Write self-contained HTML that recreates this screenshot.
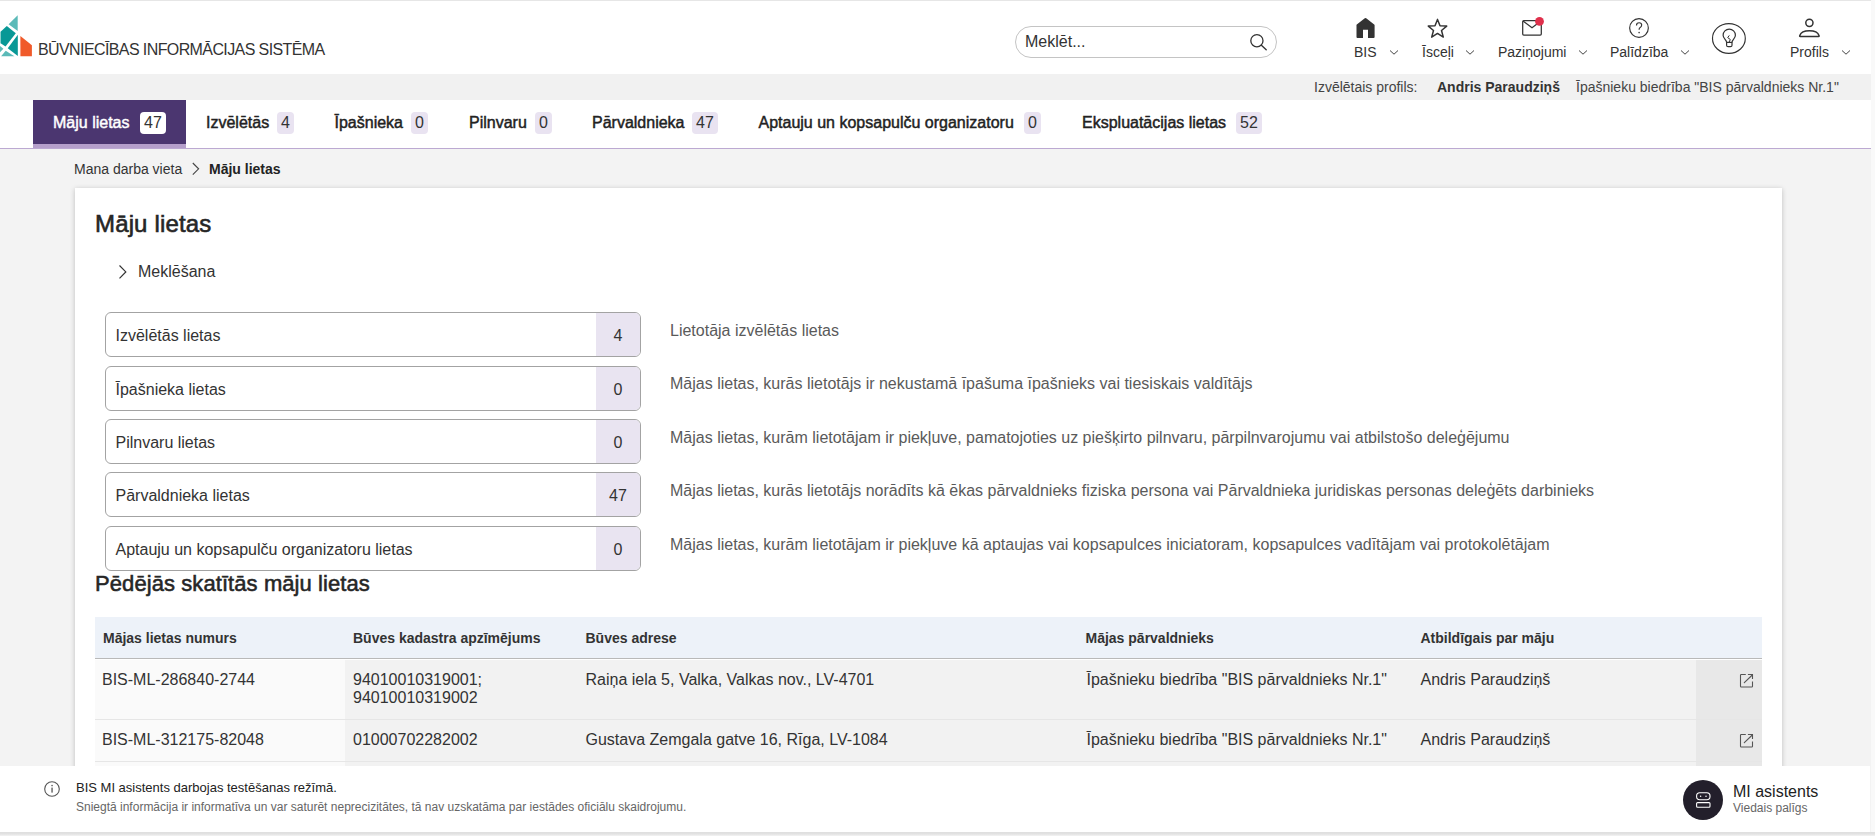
<!DOCTYPE html>
<html><head><meta charset="utf-8">
<style>
*{box-sizing:border-box;margin:0;padding:0}
html,body{width:1875px;height:836px;overflow:hidden}
body{font-family:"Liberation Sans",sans-serif;background:#f9f9f9;color:#222;position:relative}
.abs{position:absolute;white-space:nowrap}
#page{position:absolute;left:0;top:0;width:1871px;height:836px;background:#f3f3f3;overflow:hidden}
#hdr{position:absolute;left:0;top:0;width:1871px;height:74px;background:#fff;border-top:1px solid #e6e6e6}
#prof{position:absolute;left:0;top:74px;width:1871px;height:26px;background:#f1f1f1;font-size:14px;color:#444}
#tabs{position:absolute;left:0;top:100px;width:1871px;height:49px;background:#fff;border-bottom:1px solid #bca9d2}
.tabt{top:14px;font-size:16px;font-weight:400;color:#222;-webkit-text-stroke:0.45px currentColor}
.tab .t{position:absolute;top:15px}
.badge{position:absolute;top:12px;height:22px;border-radius:4px;background:#e9e3f1;color:#333;font-weight:400;font-size:16px;letter-spacing:0;text-align:center;line-height:22px}
.tab.act{background:#4b3670;color:#fff;border-bottom:4px solid #b59fcb;height:48px}
.tab.act .badge{background:#fff;color:#333}
#crumb{font-size:14px;color:#333}
#card{position:absolute;left:75px;top:188px;width:1707px;height:700px;background:#fff;box-shadow:0 1px 5px rgba(0,0,0,.22)}
.box{position:absolute;left:30px;width:536px;height:45px;border:1px solid #a3a3a3;border-radius:6px;overflow:hidden;background:#fff}
.box .l{position:absolute;left:9.5px;top:14px;font-size:16px;color:#333}
.box .c{position:absolute;right:0;top:0;width:44px;height:100%;background:#e9e4f1;font-size:16px;color:#333;text-align:center;line-height:45px}
.desc{position:absolute;left:595px;font-size:16px;color:#5a5a5a}
table{border-collapse:collapse}
.nav{font-size:14px;color:#333}
.th{font-size:14px;font-weight:700;color:#333}
.td{font-size:16px;color:#333;line-height:18px}
#foot{position:absolute;left:0;top:766px;width:1870px;height:66px;background:#fff}
#fbot{position:absolute;left:0;top:832px;width:1875px;height:4px;background:linear-gradient(#dedede,#e2e2e2 50%,#f3f3f3)}
</style></head><body>
<div id="page">
  <div id="hdr">
    <svg class="abs" style="left:0;top:-1px" width="34" height="60" viewBox="0 0 34 60">
      <polygon fill="#5bbab8" points="17.7,15.2 8.6,24.3 17.7,30.9"/>
      <polygon fill="#089896" points="6.8,26.1 15.8,33.2 5.5,46.4 0.6,43.3 0.6,31.8"/>
      <rect fill="#7ccac8" x="0" y="31.8" width="0.7" height="11.5"/>
      <polygon fill="#089896" points="17.8,34.7 17.8,55.9 7.75,48.2"/>
      <polygon fill="#5bbab8" points="1.1,56.2 14.4,56.2 5.7,50.7"/>
      <polygon fill="#5bbab8" points="0,45.9 3.4,48.7 0,52.2"/>
      <polygon fill="#f05a2a" points="20.4,36.1 31.9,45.3 31.9,56.2 20.4,56.2"/>
    </svg>
    <div class="abs" style="left:38px;top:40px;font-size:16px;letter-spacing:-0.6px;color:#333">BŪVNIECĪBAS INFORMĀCIJAS SISTĒMA</div>
    <div class="abs" style="left:1015px;top:25px;width:262px;height:32px;border:1px solid #c4c4c4;border-radius:16px;background:#fff"></div>
    <div class="abs" style="left:1025px;top:32px;font-size:16px;color:#333">Meklēt...</div>
    <svg class="abs" style="left:1248px;top:32px" width="22" height="20" viewBox="0 0 22 20">
      <circle cx="8.9" cy="7.7" r="6.1" fill="none" stroke="#333" stroke-width="1.3"/>
      <line x1="13.4" y1="12.3" x2="18.2" y2="16.7" stroke="#333" stroke-width="1.4" stroke-linecap="round"/>
    </svg>
    <!-- BIS home -->
    <svg class="abs" style="left:1355px;top:15px" width="22" height="22" viewBox="0 0 22 22">
      <path transform="translate(0,0.4)" d="M1.5,9.2 Q1.2,8.6 1.8,8.1 L9.8,1.9 Q10.5,1.4 11.2,1.9 L19.2,8.1 Q19.8,8.6 19.6,9.2 V20.6 Q19.6,21.6 18.6,21.6 H13 V13.4 H8 V21.6 H2.4 Q1.5,21.6 1.5,20.6 Z" fill="#333"/>
    </svg>
    <div class="abs nav" style="left:1354px;top:43px">BIS</div>
    <svg class="abs chev" style="left:1389px;top:48px" width="10" height="7" viewBox="0 0 10 7"><path d="M1,1.5 L5,5.2 L9,1.5" fill="none" stroke="#444" stroke-width="1"/></svg>
    <!-- star -->
    <svg class="abs" style="left:1426px;top:16px" width="23" height="23" viewBox="0 0 23 23">
      <path d="M11.5,2.4 L14.0,8.8 L20.7,9.1 L15.5,13.5 L17.3,20.1 L11.5,16.4 L5.7,20.1 L7.5,13.5 L2.3,9.1 L9.0,8.8 Z" fill="none" stroke="#333" stroke-width="1.5" stroke-linejoin="round"/>
    </svg>
    <div class="abs nav" style="left:1422px;top:43px">Īsceļi</div>
    <svg class="abs chev" style="left:1465px;top:48px" width="10" height="7" viewBox="0 0 10 7"><path d="M1,1.5 L5,5.2 L9,1.5" fill="none" stroke="#444" stroke-width="1"/></svg>
    <!-- mail -->
    <svg class="abs" style="left:1520px;top:13px" width="30" height="24" viewBox="0 0 30 24">
      <rect x="2.7" y="6.6" width="18.6" height="14.5" rx="1.1" fill="none" stroke="#333" stroke-width="1.25"/>
      <path d="M3,7.0 L12,13.8 L21,7.0" fill="none" stroke="#333" stroke-width="1.25"/>
      <circle cx="19.5" cy="7.4" r="4.4" fill="#e0304c"/>
    </svg>
    <div class="abs nav" style="left:1498px;top:43px">Paziņojumi</div>
    <svg class="abs chev" style="left:1578px;top:48px" width="10" height="7" viewBox="0 0 10 7"><path d="M1,1.5 L5,5.2 L9,1.5" fill="none" stroke="#444" stroke-width="1"/></svg>
    <!-- help -->
    <svg class="abs" style="left:1627px;top:15px" width="24" height="24" viewBox="0 0 24 24">
      <circle cx="12" cy="12" r="9.35" fill="none" stroke="#333" stroke-width="1.15"/>
      <path d="M9.5,9.4 Q9.5,6.7 12.1,6.7 Q14.7,6.7 14.7,9.1 Q14.7,10.7 12.9,11.7 Q12.1,12.2 12.1,13.8" fill="none" stroke="#333" stroke-width="1.15"/>
      <circle cx="12.1" cy="16.6" r="0.8" fill="#333"/>
    </svg>
    <div class="abs nav" style="left:1610px;top:43px">Palīdzība</div>
    <svg class="abs chev" style="left:1680px;top:48px" width="10" height="7" viewBox="0 0 10 7"><path d="M1,1.5 L5,5.2 L9,1.5" fill="none" stroke="#444" stroke-width="1"/></svg>
    <!-- bulb -->
    <svg class="abs" style="left:1705px;top:14px" width="50" height="45" viewBox="0 0 50 45">
      <ellipse cx="23.9" cy="23.45" rx="16.4" ry="14.9" fill="none" stroke="#333" stroke-width="1.15"/>
      <path d="M21.6,27.4 C21.6,25 18.1,23.6 18.1,20.3 A6.15,6.15 0 1 1 30.4,20.3 C30.4,23.6 27,25 27,27.4 Z" fill="none" stroke="#333" stroke-width="1.2" stroke-linejoin="round"/>
      <path d="M21.6,27.4 V30.2 Q21.6,31.7 23.1,31.7 H25.5 Q27,31.7 27,30.2 V27.4" fill="none" stroke="#333" stroke-width="1.2"/>
      <path d="M24.3,20.4 L22.7,22.6 L25.3,24.5 L24.2,27" fill="none" stroke="#333" stroke-width="1"/>
    </svg>
    <!-- person -->
    <svg class="abs" style="left:1797px;top:15px" width="25" height="23" viewBox="0 0 25 23">
      <circle cx="12.4" cy="6.8" r="3.6" fill="none" stroke="#333" stroke-width="1.5"/>
      <path d="M3.2,20.6 Q2.4,20.6 2.8,19.4 Q4.4,14.7 12.4,14.7 Q20.4,14.7 22,19.4 Q22.4,20.6 21.6,20.6 Z" fill="none" stroke="#333" stroke-width="1.5" stroke-linejoin="round"/>
    </svg>
    <div class="abs nav" style="left:1790px;top:43px">Profils</div>
    <svg class="abs chev" style="left:1841px;top:48px" width="10" height="7" viewBox="0 0 10 7"><path d="M1,1.5 L5,5.2 L9,1.5" fill="none" stroke="#444" stroke-width="1"/></svg>
  </div>
  <div id="prof">
    <div class="abs" style="left:1314px;top:5px">Izvēlētais profils:</div>
    <div class="abs" style="left:1437px;top:5px;font-weight:700;color:#333">Andris Paraudziņš</div>
    <div class="abs" style="left:1576px;top:5px">Īpašnieku biedrība "BIS pārvaldnieks Nr.1"</div>
  </div>
  <div id="tabs">
    <div class="abs act" style="left:33px;top:0;width:153px;height:48px;background:#4b3670;border-bottom:4px solid #b59fcb"></div>
    <div class="abs tabt" style="left:53px;color:#fff">Māju lietas</div>
    <div class="abs badge" style="left:140px;width:26px;background:#fff">47</div>
    <div class="abs tabt" style="left:206px;color:#222">Izvēlētās</div>
    <div class="abs badge" style="left:277px;width:17px;background:#e9e3f1">4</div>
    <div class="abs tabt" style="left:334.5px;color:#222">Īpašnieka</div>
    <div class="abs badge" style="left:411px;width:17px;background:#e9e3f1">0</div>
    <div class="abs tabt" style="left:469px;color:#222">Pilnvaru</div>
    <div class="abs badge" style="left:535px;width:17px;background:#e9e3f1">0</div>
    <div class="abs tabt" style="left:592px;color:#222">Pārvaldnieka</div>
    <div class="abs badge" style="left:692px;width:26px;background:#e9e3f1">47</div>
    <div class="abs tabt" style="left:758.5px;color:#222">Aptauju un kopsapulču organizatoru</div>
    <div class="abs badge" style="left:1024px;width:17px;background:#e9e3f1">0</div>
    <div class="abs tabt" style="left:1082px;color:#222">Ekspluatācijas lietas</div>
    <div class="abs badge" style="left:1236px;width:26px;background:#e9e3f1">52</div>
  </div>
  <div class="abs" id="crumb" style="left:74px;top:161px">Mana darba vieta</div>
  <svg class="abs" style="left:191px;top:162px" width="10" height="14" viewBox="0 0 10 14"><path d="M1.8,1 L7.6,6.8 L1.8,12.6" fill="none" stroke="#444" stroke-width="1.1"/></svg>
  <div class="abs" style="left:209px;top:161px;font-size:14px;font-weight:700;color:#222">Māju lietas</div>
  <div id="card">
    <div class="abs" style="left:20px;top:22px;font-size:24px;font-weight:400;color:#262626;letter-spacing:0.15px;-webkit-text-stroke:0.6px currentColor">Māju lietas</div>
    <svg class="abs" style="left:42px;top:76px" width="12" height="16" viewBox="0 0 12 16"><path d="M2.5,1.5 L8.8,7.9 L2.5,14.3" fill="none" stroke="#333" stroke-width="1.2"/></svg>
    <div class="abs" style="left:63px;top:75px;font-size:16px;color:#333">Meklēšana</div>
    <div class="box" style="top:124px"><div class="l">Izvēlētās lietas</div><div class="c">4</div></div>
    <div class="box" style="top:178px"><div class="l">Īpašnieka lietas</div><div class="c">0</div></div>
    <div class="box" style="top:231px"><div class="l">Pilnvaru lietas</div><div class="c">0</div></div>
    <div class="box" style="top:284px"><div class="l">Pārvaldnieka lietas</div><div class="c">47</div></div>
    <div class="box" style="top:338px"><div class="l">Aptauju un kopsapulču organizatoru lietas</div><div class="c">0</div></div>
    <div class="abs desc" style="top:134px">Lietotāja izvēlētās lietas</div>
    <div class="abs desc" style="top:187px">Mājas lietas, kurās lietotājs ir nekustamā īpašuma īpašnieks vai tiesiskais valdītājs</div>
    <div class="abs desc" style="top:241px">Mājas lietas, kurām lietotājam ir piekļuve, pamatojoties uz piešķirto pilnvaru, pārpilnvarojumu vai atbilstošo deleģējumu</div>
    <div class="abs desc" style="top:294px">Mājas lietas, kurās lietotājs norādīts kā ēkas pārvaldnieks fiziska persona vai Pārvaldnieka juridiskas personas deleģēts darbinieks</div>
    <div class="abs desc" style="top:348px">Mājas lietas, kurām lietotājam ir piekļuve kā aptaujas vai kopsapulces iniciatoram, kopsapulces vadītājam vai protokolētājam</div>
    <div class="abs" style="left:20px;top:383px;font-size:22px;font-weight:400;color:#262626;letter-spacing:0.08px;-webkit-text-stroke:0.55px currentColor">Pēdējās skatītās māju lietas</div>
    <div class="abs" style="left:20px;top:429px;width:1667px;height:42px;background:#edf2f9;border-bottom:1px solid #b9b9b9"></div>
    <div class="abs th" style="left:28px;top:442px">Mājas lietas numurs</div>
    <div class="abs th" style="left:278px;top:442px">Būves kadastra apzīmējums</div>
    <div class="abs th" style="left:510.5px;top:442px">Būves adrese</div>
    <div class="abs th" style="left:1010.5px;top:442px">Mājas pārvaldnieks</div>
    <div class="abs th" style="left:1345.5px;top:442px">Atbildīgais par māju</div>
    <div class="abs" style="left:20px;top:472px;width:250px;height:59px;background:#fafafa"></div>
    <div class="abs" style="left:270px;top:472px;width:1351px;height:59px;background:#f2f2f2"></div>
    <div class="abs" style="left:1621px;top:472px;width:66px;height:59px;background:#e8e8e8"></div>
    <div class="abs" style="left:20px;top:531px;width:1667px;height:1px;background:#e6e6e6"></div>
    <div class="abs" style="left:20px;top:532px;width:250px;height:41px;background:#fafafa"></div>
    <div class="abs" style="left:270px;top:532px;width:1351px;height:41px;background:#f2f2f2"></div>
    <div class="abs" style="left:1621px;top:532px;width:66px;height:41px;background:#e8e8e8"></div>
    <div class="abs" style="left:20px;top:573px;width:1667px;height:1px;background:#e6e6e6"></div>
    <div class="abs" style="left:20px;top:574px;width:250px;height:38px;background:#fafafa"></div>
    <div class="abs" style="left:270px;top:574px;width:1351px;height:38px;background:#f2f2f2"></div>
    <div class="abs" style="left:1621px;top:574px;width:66px;height:38px;background:#e8e8e8"></div>
    <div class="abs" style="left:20px;top:612px;width:1667px;height:1px;background:#e6e6e6"></div>
    <div class="abs td" style="left:27px;top:483px">BIS-ML-286840-2744</div>
    <div class="abs td" style="left:278px;top:483px">94010010319001;<br>94010010319002</div>
    <div class="abs td" style="left:510.5px;top:483px">Raiņa iela 5, Valka, Valkas nov., LV-4701</div>
    <div class="abs td" style="left:1011.5px;top:483px">Īpašnieku biedrība "BIS pārvaldnieks Nr.1"</div>
    <div class="abs td" style="left:1345.5px;top:483px">Andris Paraudziņš</div>
    <svg class="abs" style="left:1663px;top:484px" width="18" height="18" viewBox="0 0 18 18"><path d="M7.8,2.5 H3.3 Q2.5,2.5 2.5,3.3 V14.2 Q2.5,15 3.3,15 H13.7 Q14.5,15 14.5,14.2 V9.5 M9.9,2.5 H14.5 V7" fill="none" stroke="#555" stroke-width="1.1"/><path d="M6.3,10.6 L14.3,3" fill="none" stroke="#555" stroke-width="1.1" stroke-linecap="round"/></svg>
    <div class="abs td" style="left:27px;top:543px">BIS-ML-312175-82048</div>
    <div class="abs td" style="left:278px;top:543px">01000702282002</div>
    <div class="abs td" style="left:510.5px;top:543px">Gustava Zemgala gatve 16, Rīga, LV-1084</div>
    <div class="abs td" style="left:1011.5px;top:543px">Īpašnieku biedrība "BIS pārvaldnieks Nr.1"</div>
    <div class="abs td" style="left:1345.5px;top:543px">Andris Paraudziņš</div>
    <svg class="abs" style="left:1663px;top:544px" width="18" height="18" viewBox="0 0 18 18"><path d="M7.8,2.5 H3.3 Q2.5,2.5 2.5,3.3 V14.2 Q2.5,15 3.3,15 H13.7 Q14.5,15 14.5,14.2 V9.5 M9.9,2.5 H14.5 V7" fill="none" stroke="#555" stroke-width="1.1"/><path d="M6.3,10.6 L14.3,3" fill="none" stroke="#555" stroke-width="1.1" stroke-linecap="round"/></svg>
  </div>
  <div id="foot">
    <svg class="abs" style="left:43px;top:14px" width="18" height="18" viewBox="0 0 18 18">
      <circle cx="9" cy="9" r="7.3" fill="none" stroke="#555" stroke-width="1.1"/>
      <rect x="8.4" y="7.6" width="1.3" height="5" fill="#555"/>
      <circle cx="9.05" cy="5.6" r="0.8" fill="#555"/>
    </svg>
    <div class="abs" style="left:76px;top:14px;font-size:13px;color:#222">BIS MI asistents darbojas testēšanas režīmā.</div>
    <div class="abs" style="left:76px;top:34px;font-size:12px;color:#666">Sniegtā informācija ir informatīva un var saturēt neprecizitātes, tā nav uzskatāma par iestādes oficiālu skaidrojumu.</div>
    <svg class="abs" style="left:1683px;top:14px" width="40" height="40" viewBox="0 0 40 40">
      <circle cx="20" cy="20" r="20" fill="#231f2b"/>
      <rect x="13.6" y="12.8" width="13.4" height="7" rx="3.2" fill="none" stroke="#fff" stroke-width="1.1"/>
      <circle cx="17.6" cy="16.3" r="0.75" fill="#fff"/>
      <circle cx="23" cy="16.3" r="0.75" fill="#fff"/>
      <rect x="13.6" y="22.6" width="13.4" height="4.7" rx="1" fill="none" stroke="#fff" stroke-width="1.1"/>
    </svg>
    <div class="abs" style="left:1733px;top:17px;font-size:16px;color:#222">MI asistents</div>
    <div class="abs" style="left:1733px;top:35px;font-size:12px;color:#666">Viedais palīgs</div>
  </div>
</div>
<div id="fbot"></div>
</body></html>
